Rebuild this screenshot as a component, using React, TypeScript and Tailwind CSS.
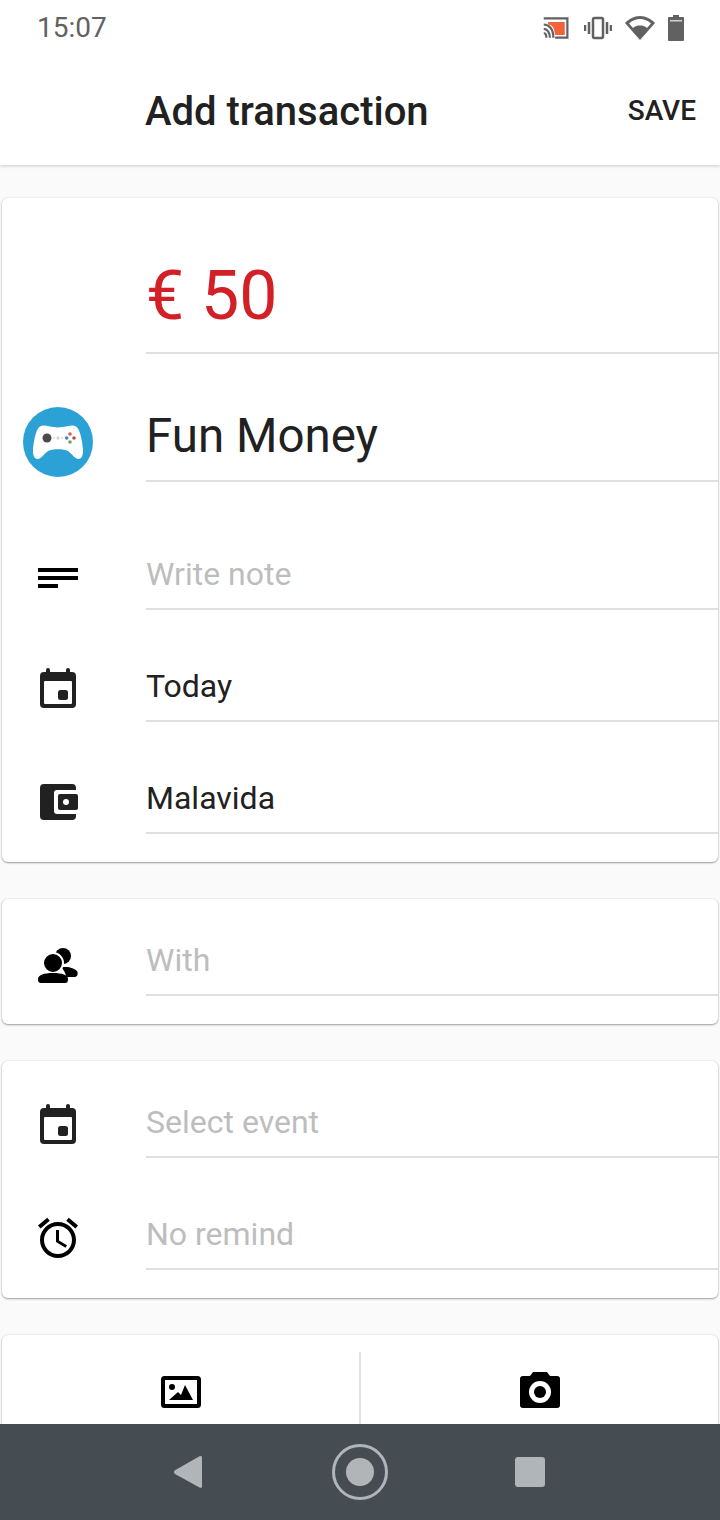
import type { ReactNode } from "react"

const CalendarIcon = () => (
  <svg width="48" height="48" viewBox="0 0 48 48">
    <path d="M14 4v5M34 4v5" stroke="#212121" strokeWidth="4" strokeLinecap="round" />
    <rect x="6" y="6" width="36" height="36" rx="4" fill="#212121" />
    <rect x="10" y="15" width="28" height="23" rx="1" fill="#fff" />
    <rect x="24" y="24" width="10" height="10" rx="2.500" fill="#212121" />
  </svg>
)

function Row({ icon, text, muted, h = "h-[112px]" }: { icon?: ReactNode; text: string; muted?: boolean; h?: string }) {
  return (
    <div className={`flex ${h}`}>
      <div className="flex w-[144px] shrink-0 items-end justify-start pb-[8px] pl-[32px]">{icon}</div>
      <div className={`flex flex-1 items-end border-b-2 border-[#e0e0e0] pb-[12px] text-[32px] leading-[44px] ${muted ? "text-[#bdbdbd]" : "text-[#212121]"}`}>
        {text}
      </div>
    </div>
  )
}

function Card({ children, className = "" }: { children: ReactNode; className?: string }) {
  return (
    <div className={`mx-[2px] rounded-[6px] bg-white shadow-[0_1px_2px_rgba(0,0,0,0.35),0_0_2px_rgba(0,0,0,0.12)] ${className}`}>{children}</div>
  )
}

export default function App() {
  return (
    <div className="flex h-[1520px] w-[720px] flex-col overflow-hidden bg-[#fafafa] font-['Roboto',sans-serif]">
      <header className="z-10 h-[165px] shrink-0 bg-white shadow-[0_1px_3px_rgba(0,0,0,0.2)]">
        <div className="flex h-[56px] items-center justify-between pl-[37px] pr-[36px]">
          <span className="text-[28px] leading-none text-[#616161]">15:07</span>
          <div className="flex items-center gap-[13px] text-[#616161]">
            <svg width="28" height="24" viewBox="0 0 32 26" className="mr-[1px]">
              <path d="M2 2h27v22H15" fill="none" stroke="#616161" strokeWidth="2.500" />
              <path d="M7 6h19v15H15C14 13 12 9 7 9z" fill="#f4623a" />
              <path d="M2 9c6 0 11 5 11 15M2 14c4 0 7 4 7 10M2 19c2 0 3 2 3 5" fill="none" stroke="#616161" strokeWidth="2.500" />
            </svg>
            <svg width="28" height="24" viewBox="0 0 28 24" fill="none" stroke="#616161" strokeWidth="2.500">
              <rect x="9" y="2" width="10" height="20" rx="1.500" />
              <path d="M5 6v12M23 6v12M1 9v6M27 9v6" />
            </svg>
            <svg width="30" height="24" viewBox="0 0 30 24" fill="#616161">
              <path d="M15 24 0 7c4-4 9-7 15-7s11 3 15 7z" />
              <path d="M15 3c-4 0-8 1.500-11 4.500l4 4.500c2-2 4.500-2.500 7-2.500s5 .5 7 2.500l4-4.500c-3-3-7-4.500-11-4.500z" fill="#fff" />
            </svg>
            <svg width="16" height="26" viewBox="0 0 16 26" fill="#616161">
              <path d="M5 0h6v2h4a1 1 0 0 1 1 1v22a1 1 0 0 1-1 1H1a1 1 0 0 1-1-1V3a1 1 0 0 1 1-1h4z" />
              <rect x="2" y="5" width="12" height="1.500" fill="#d0d0d0" />
            </svg>
          </div>
        </div>
        <div className="flex h-[109px] items-center justify-between pl-[145px] pr-[24px] pt-[2px]">
          <h1 className="text-[40px] font-medium leading-none text-[#212121]">Add transaction</h1>
          <button className="mb-[2px] text-[28px] font-medium leading-none text-[#212121]">SAVE</button>
        </div>
      </header>

      <main className="flex flex-1 flex-col gap-[37px] overflow-hidden pt-[33px]">
        <Card className="h-[664px] shrink-0">
          <div className="ml-[144px] flex h-[156px] items-end border-b-2 border-[#e0e0e0] pb-[18px] text-[68px] leading-[75px] text-[#d32027]">
            € 50
          </div>
          <div className="flex h-[128px]">
            <div className="flex w-[144px] shrink-0 items-end pb-[5px] pl-[21px]">
              <svg width="70" height="70" viewBox="0 0 70 70">
                <circle cx="35" cy="35" r="35" fill="#2ca1d6" />
                <path d="M17 19.500C21 17 27 20.500 35 20.500C43 20.500 49 17 53 19.500C57 22 59 33 60 42C60.500 49 58 52 55.500 52C52 52 49 47 45 44C41 41.500 29 41.500 25 44C21 47 18 52 14.500 52C12 52 9.500 49 10 42C11 33 13 22 17 19.500z" fill="#fff" />
                <circle cx="24" cy="31" r="4.500" fill="#4a4a4a" />
                <circle cx="35" cy="31" r="1.200" fill="none" stroke="#aaa" strokeWidth="0.600" />
                <path d="M30 31h1.500M38.500 31h1.500" stroke="#aaa" strokeWidth="0.800" />
                <circle cx="43.700" cy="31" r="1.800" fill="#4a80c0" />
                <circle cx="47" cy="27" r="1.800" fill="#d0604f" />
                <circle cx="51" cy="31" r="1.800" fill="#c04a45" />
                <circle cx="47" cy="35" r="1.800" fill="#5fad5f" />
              </svg>
            </div>
            <div className="flex flex-1 items-end border-b-2 border-[#e0e0e0] pb-[16px] text-[47.500px] leading-[56px] text-[#212121]">
              Fun Money
            </div>
          </div>
          <Row
            h="h-[128px]"
            muted
            text="Write note"
            icon={
              <svg width="48" height="48" viewBox="0 0 48 48" fill="#000">
                <path d="M4 14h40v4H4zM4 22h40v4H4zM4 30h20v4H4z" />
              </svg>
            }
          />
          <Row text="Today" icon={<CalendarIcon />} />
          <Row
            text="Malavida"
            icon={
              <svg width="48" height="48" viewBox="0 0 48 48">
                <rect x="6" y="6" width="36" height="36" rx="4" fill="#212121" />
                <rect x="20" y="12" width="28" height="24" rx="3" fill="#fff" />
                <rect x="24" y="16" width="20" height="16" rx="2" fill="#212121" />
                <circle cx="32" cy="24" r="3" fill="#fff" />
              </svg>
            }
          />
        </Card>

        <Card className="h-[125px] shrink-0">
          <Row
            h="h-[97px]"
            muted
            text="With"
            icon={
              <svg width="48" height="48" viewBox="0 0 48 48" fill="#000">
                <circle cx="29" cy="16" r="8" />
                <path d="M32 27c4 0 9 2 11 4 1.500 2 .5 6-2 6h-9c0-3-2-7-5-10z" />
                <circle cx="19" cy="23" r="10" stroke="#fff" strokeWidth="2" />
                <path d="M4 39c0-4 6-6 15-6s15 2 15 6c0 3-1 4-3 4H7c-2 0-3-1-3-4z" />
              </svg>
            }
          />
        </Card>

        <Card className="h-[237px] shrink-0">
          <Row h="h-[97px]" muted text="Select event" icon={<CalendarIcon />} />
          <Row
            muted
            text="No remind"
            icon={
              <svg width="48" height="48" viewBox="0 0 24 24" fill="#000">
                <path d="M22 5.720l-4.600-3.860-1.290 1.530 4.600 3.860L22 5.720zM7.880 3.390L6.600 1.860 2 5.710l1.290 1.530 4.590-3.850zM12.500 8H11v6l4.750 2.850.75-1.230-4-2.370V8zM12 4c-4.970 0-9 4.030-9 9s4.030 9 9 9 9-4.030 9-9-4.030-9-9-9zm0 16c-3.870 0-7-3.130-7-7s3.130-7 7-7 7 3.130 7 7-3.130 7-7 7z" />
              </svg>
            }
          />
        </Card>

        <Card className="flex h-[120px] shrink-0 pt-[17px]">
          <div className="flex flex-1 justify-center border-r-2 border-[#e0e0e0] pt-[15px]">
            <svg width="48" height="48" viewBox="0 0 48 48" fill="#000">
              <rect x="6" y="11" width="36" height="28" rx="1.500" fill="none" stroke="#000" strokeWidth="4" />
              <circle cx="15" cy="20" r="3" />
              <path d="M12 33l9-8 3 3 4-10 8 15z" />
            </svg>
          </div>
          <div className="flex flex-1 justify-center pt-[15px]">
            <svg width="48" height="48" viewBox="0 0 48 48">
              <path d="M14 9l3-4h14l3 4z" fill="#000" />
              <rect x="4" y="9" width="40" height="32" rx="3" fill="#000" />
              <circle cx="24" cy="25" r="11" fill="#fff" />
              <circle cx="24" cy="25" r="6" fill="#000" />
            </svg>
          </div>
        </Card>
      </main>

      <nav className="z-10 flex h-[96px] shrink-0 items-center justify-center bg-[#454d52] pr-[1px]">
        <svg width="28" height="32" viewBox="0 0 28 32" fill="#b1b5b7">
          <path d="M26.500 0c.9 0 1.500.6 1.500 1.500v29c0 1-1 1.800-2 1.300L1 18c-1.300-.8-1.300-3 0-3.800L25.500.3c.3-.2.700-.3 1-.3z" />
        </svg>
        <div className="ml-[130px] mr-[127px] flex size-[56px] items-center justify-center rounded-full border-[3px] border-[#b1b5b7]">
          <div className="size-[28px] rounded-full bg-[#b1b5b7]" />
        </div>
        <div className="size-[30px] rounded-[3px] bg-[#b1b5b7]" />
      </nav>
    </div>
  )
}
